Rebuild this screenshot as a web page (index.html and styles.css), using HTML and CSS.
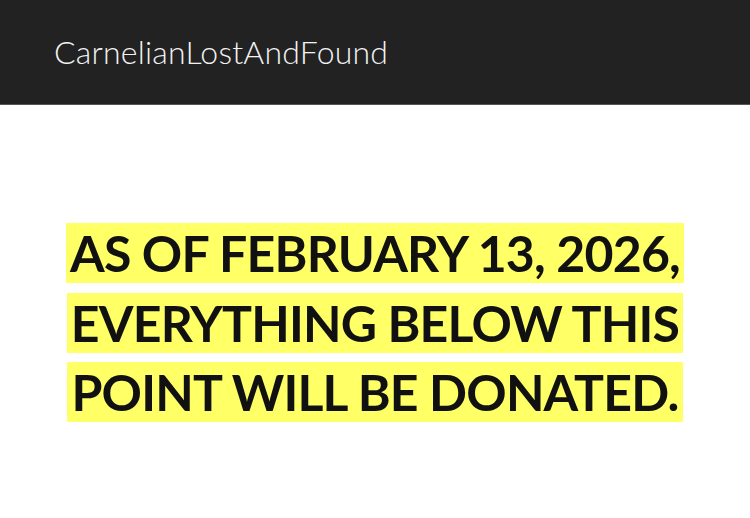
FILE: index.html
```html
<!DOCTYPE html>
<html>
<head>
<meta charset="utf-8">
<link rel="stylesheet" href="styles.css">
</head>
<body>
<header class="topbar">
  <div class="brand">CarnelianLostAndFound</div>
</header>
<main class="content">
  <h1 class="notice"><span class="mark">As of February 13, 2026, everything below this point will be donated.</span></h1>
</main>
</body>
</html>
```
FILE: styles.css
```css
html, body {
  margin: 0;
  padding: 0;
  background: #ffffff;
  font-family: Lato, "Liberation Sans", sans-serif;
}
.topbar {
  background: #222222;
  height: 105px;
  border-bottom: 1px solid #555;
  box-sizing: border-box;
  display: flex;
  align-items: center;
  padding-left: 54px;
}
.brand {
  color: #f2f2f2;
  font-weight: 300;
  font-size: 32px;
  letter-spacing: 0.2px;
  margin-top: -2px;
}
.content {
  display: flex;
  justify-content: center;
  padding-top: 114px;
}
.notice {
  margin: 0;
  width: 640px;
  text-align: center;
  text-transform: uppercase;
  font-weight: 700;
  font-size: 50px;
  letter-spacing: -0.8px;
  line-height: 69.5px;
  color: #111;
}
.mark {
  background: #ffff66;
  padding: 0 4px;
  -webkit-box-decoration-break: clone;
  box-decoration-break: clone;
}
```
